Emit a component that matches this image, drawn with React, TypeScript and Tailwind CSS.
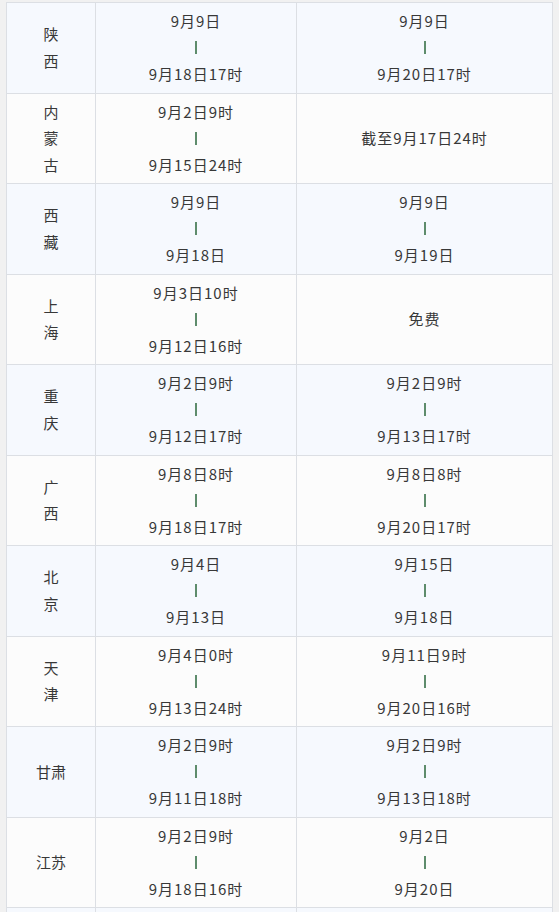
type Cell = string[]

type Row = {
	name: string[]
	a: Cell
	b: Cell
}

const rows: Row[] = [
	{ name: ["陕", "西"], a: ["9月9日", "9月18日17时"], b: ["9月9日", "9月20日17时"] },
	{ name: ["内", "蒙", "古"], a: ["9月2日9时", "9月15日24时"], b: ["截至9月17日24时"] },
	{ name: ["西", "藏"], a: ["9月9日", "9月18日"], b: ["9月9日", "9月19日"] },
	{ name: ["上", "海"], a: ["9月3日10时", "9月12日16时"], b: ["免费"] },
	{ name: ["重", "庆"], a: ["9月2日9时", "9月12日17时"], b: ["9月2日9时", "9月13日17时"] },
	{ name: ["广", "西"], a: ["9月8日8时", "9月18日17时"], b: ["9月8日8时", "9月20日17时"] },
	{ name: ["北", "京"], a: ["9月4日", "9月13日"], b: ["9月15日", "9月18日"] },
	{ name: ["天", "津"], a: ["9月4日0时", "9月13日24时"], b: ["9月11日9时", "9月20日16时"] },
	{ name: ["甘肃"], a: ["9月2日9时", "9月11日18时"], b: ["9月2日9时", "9月13日18时"] },
	{ name: ["江苏"], a: ["9月2日9时", "9月18日16时"], b: ["9月2日", "9月20日"] },
]

function Range({ lines }: { lines: Cell }) {
	if (lines.length === 1) {
		return <div className="tracking-[1px]">{lines[0]}</div>
	}
	return (
		<div className="flex flex-col items-center tracking-[1px]">
			<div>{lines[0]}</div>
			<div className="flex h-[26.5px] items-center">
				<span className="block h-[13px] w-[2px] bg-[#5e8c6c]" />
			</div>
			<div>{lines[1]}</div>
		</div>
	)
}

export default function App() {
	return (
		<div
			className="h-[912px] overflow-hidden bg-[#f1f1f1] pl-[6px] pt-[2px] text-[15px] leading-[26.5px] text-[#383838]"
			style={{ fontFamily: '"Noto Sans CJK SC", "Noto Sans", sans-serif' }}
		>
			<table className="w-[546px] table-fixed border-collapse">
				<colgroup>
					<col className="w-[89px]" />
					<col className="w-[201px]" />
					<col className="w-[256px]" />
				</colgroup>
				<tbody>
					{rows.map((row, i) => (
						<tr
							key={i}
							className={i % 2 === 0 ? "h-[90.5px] bg-[#f6f9fe]" : "h-[90.5px] bg-[#fcfcfc]"}
						>
							<td className="border border-[#dcdfe4] p-0 text-center align-middle">
								<div className="flex flex-col items-center">
									{row.name.map((c, j) => (
										<div key={j}>{c}</div>
									))}
								</div>
							</td>
							<td className="border border-[#dcdfe4] p-0 text-center align-middle">
								<Range lines={row.a} />
							</td>
							<td className="border border-[#dcdfe4] p-0 text-center align-middle">
								<Range lines={row.b} />
							</td>
						</tr>
					))}
					{/* next row, only its top edge shows */}
					<tr className="h-[90.5px] bg-[#f6f9fe]">
						<td className="border border-[#dcdfe4] p-0" />
						<td className="border border-[#dcdfe4] p-0" />
						<td className="border border-[#dcdfe4] p-0" />
					</tr>
				</tbody>
			</table>
		</div>
	)
}
